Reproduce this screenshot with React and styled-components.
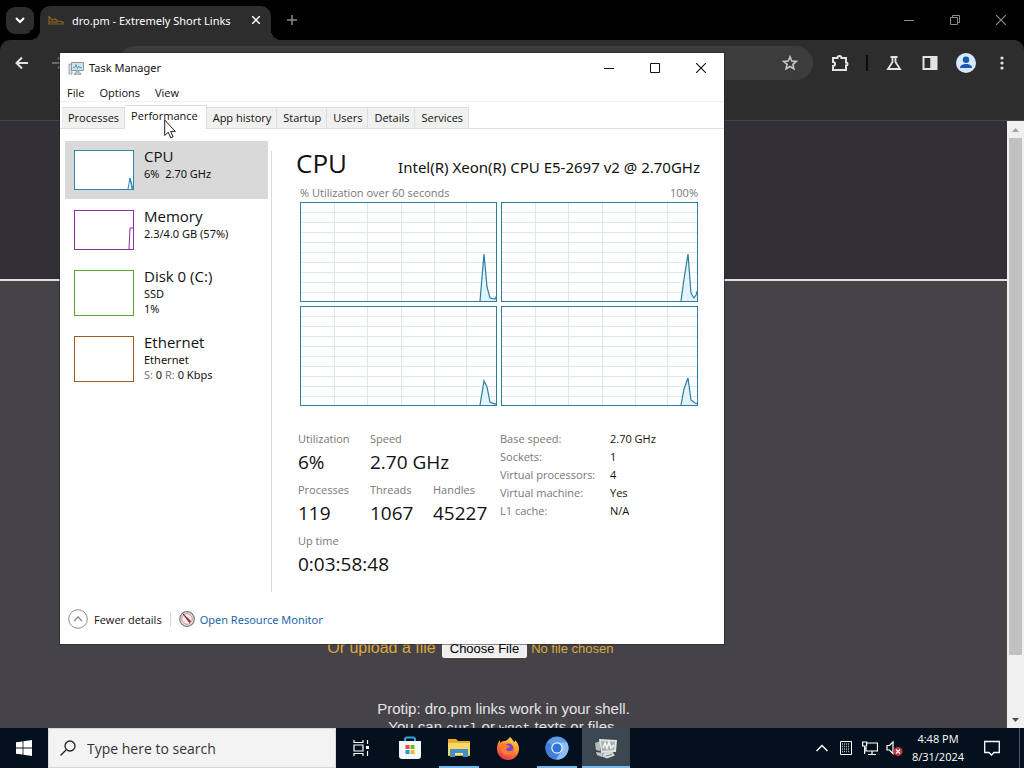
import React from "react";
import styled, { createGlobalStyle } from "styled-components";

const ui = `"Open Sans", "Noto Sans", sans-serif`;
const uiWide = `"Noto Sans", "Open Sans", sans-serif`;
const web = `"Liberation Sans", Arial, sans-serif`;

const GlobalStyle = createGlobalStyle`
  *, *::before, *::after { box-sizing: border-box; }
  html, body { margin: 0; }
  body { background: #000; font-family: ${ui}; font-size: 11px; color: #111; }
  button, input { font: inherit; color: inherit; }
  button { border: 0; padding: 0; background: none; }
  svg { display: block; flex: none; }
  h1, h2, p, dl, dd, dt { margin: 0; font-weight: 400; }
`;

const Desktop = styled.div`
  position: relative;
  display: grid;
  grid-template-rows: minmax(0, 1fr) 40px;
  height: 100vh;
  overflow: hidden;
`;

/* ---------- Browser ---------- */

const Browser = styled.div`
  display: flex;
  flex-direction: column;
  min-height: 0;
  background: #000;
`;

const TabStrip = styled.div`
  display: flex;
  align-items: center;
  height: 40px;
  flex: none;
  padding-left: 6px;
  color: #fff;
`;

const TabSearch = styled.button`
  display: grid;
  place-items: center;
  width: 28px;
  height: 27px;
  margin-right: 6px;
  border-radius: 9px;
  background: #2d2d2d;
`;

const BrowserTab = styled.div`
  position: relative;
  display: flex;
  align-items: center;
  gap: 8px;
  align-self: flex-end;
  width: 231px;
  height: 34px;
  padding: 0 7px 6px 8px;
  border-radius: 10px 10px 0 0;
  background: #2d2d2d;

  &::before, &::after {
    content: "";
    position: absolute;
    bottom: 0;
    width: 10px;
    height: 10px;
  }
  &::before {
    left: -10px;
    background: radial-gradient(circle at 0 0, #000 10px, #2d2d2d 10px);
  }
  &::after {
    right: -10px;
    background: radial-gradient(circle at 100% 0, #000 10px, #2d2d2d 10px);
  }
`;

const TabTitle = styled.span`
  flex: 1;
  white-space: nowrap;
  font-family: ${uiWide};
`;

const IconButton = styled.button`
  display: grid;
  place-items: center;
  width: ${(p) => p.$w || 24}px;
  height: ${(p) => p.$h || 24}px;
  color: ${(p) => p.$color || "inherit"};
`;

const Spacer = styled.div`
  flex: 1;
`;

const Toolbar = styled.div`
  display: flex;
  align-items: center;
  flex: none;
  height: 81px;
  padding: 0 10px 35px;
  border-bottom: 1px solid #47474a;
  border-radius: 10px 10px 0 0;
  background: #2d2d2d;
  color: #e3e3e3;
`;

const AddressBar = styled.div`
  display: flex;
  align-items: center;
  justify-content: flex-end;
  flex: 1;
  height: 34px;
  margin: 0 15px 0 36px;
  padding-right: 11px;
  border-radius: 17px;
  background: #3c3c3c;
`;

const ToolbarActions = styled.div`
  display: flex;
  align-items: center;
  gap: 12px;
`;

const ToolbarRule = styled.span`
  width: 2px;
  height: 16px;
  margin: 0 2px;
  background: #0c0c0c;
`;

const Viewport = styled.div`
  display: flex;
  flex: 1;
  min-height: 0;
`;

const Page = styled.div`
  flex: 1;
  min-width: 0;
  overflow: hidden;
  background: #454348;
  color: #e4e4e4;
  font-family: ${web};
  font-size: 16px;
`;

const Banner = styled.div`
  height: 160px;
  border-bottom: 2px solid #e0e0e0;
  background: #323036;
`;

const PageBody = styled.main`
  display: flex;
  flex-direction: column;
  align-items: center;
  padding-top: 357px;
`;

const Upload = styled.div`
  display: flex;
  align-items: center;
  gap: 6px;
  height: 20px;
  margin-bottom: 42px;
  color: #dba73f;
`;

const FileField = styled.input`
  width: 238px;
  font-family: ${web};
  font-size: 13px;

  &::file-selector-button {
    margin: 0 4px 0 0;
    padding: 1px 7px;
    border: 1px solid #f5f5f5;
    border-radius: 2px;
    background: #efefef;
    color: #000;
    font: inherit;
  }
`;

const Tip = styled.p`
  font-size: 15px;
  line-height: 18px;
  text-align: center;

  code {
    font-family: "Liberation Mono", monospace;
    font-size: 13px;
  }
`;

const ScrollRail = styled.div`
  display: flex;
  flex-direction: column;
  align-items: center;
  width: 17px;
  background: #f0f0f0;
  color: #a5a5a5;
`;

const ScrollThumb = styled.div`
  width: 13px;
  flex: 0 1 517px;
  background: #c1c1c1;
`;

/* ---------- Task Manager ---------- */

const Window = styled.section`
  position: absolute;
  top: 53px;
  left: 60px;
  right: 300px;
  background: #fff;
  box-shadow: 0 0 0 1px rgba(30, 30, 30, 0.5);
`;

const TitleBar = styled.header`
  display: flex;
  align-items: center;
  height: 29px;
  padding-left: 8px;
`;

const WindowTitle = styled.h1`
  flex: 1;
  margin-left: 5px;
  font-family: ${uiWide};
  font-size: 11px;
`;

const MenuBar = styled.nav`
  display: flex;
  gap: 15px;
  height: 20px;
  padding: 0 7px;
  border-bottom: 1px solid #f0f0f0;
  line-height: 22px;
`;

const Tabs = styled.div`
  display: flex;
  align-items: flex-end;
  height: 27px;
  padding-left: 2px;
  border-bottom: 1px solid #dedede;
`;

const Tab = styled.button`
  height: ${(p) => (p.$active ? 24 : 21)}px;
  margin-bottom: ${(p) => (p.$active ? -1 : 0)}px;
  padding: ${(p) => (p.$active ? "0 8px 4px 6px" : "0 5px 0 6px")};
  border: solid #dedede;
  border-width: 1px 1px 0 0;
  background: ${(p) => (p.$active ? "#fff" : "#f0f0f0")};
  line-height: 18px;
  white-space: nowrap;
`;

const Body = styled.div`
  display: flex;
  min-height: 463px;
  padding-top: 12px;
`;

const Sidebar = styled.div`
  display: flex;
  flex-direction: column;
  gap: 2px;
  width: 208px;
  padding-left: 5px;
`;

const Resource = styled.button`
  display: flex;
  align-items: flex-start;
  gap: 10px;
  height: ${(p) => (p.$tall ? 64 : 58)}px;
  padding: 7px 9px;
  background: ${(p) => (p.$active ? "#d9d9d9" : "transparent")};
  text-align: left;
  line-height: 15px;
`;

const Thumb = styled.svg`
  width: 60px;
  height: ${(p) => (p.$tall ? 46 : 40)}px;
  margin-top: 2px;
  border: 1px solid ${(p) => p.$color};
  background: #fff;
  stroke: ${(p) => p.$color};
`;

const ResourceName = styled.span`
  display: block;
  padding-bottom: 2px;
  font-size: 15px;
  line-height: 16px;
`;

const ResourceLine = styled.span`
  display: block;
  white-space: pre;
  font-family: ${uiWide};
`;

const Muted = styled.span`
  color: #777;
`;

const Divider = styled.div`
  width: 1px;
  margin: 10px 24px 0 3px;
  background: #dcdcdc;
`;

const Detail = styled.div`
  flex: 1;
  min-width: 0;
  padding-right: 24px;
`;

const DetailHead = styled.div`
  display: flex;
  align-items: baseline;
  justify-content: space-between;
  height: 44px;
  white-space: nowrap;
  line-height: 44px;

  h2 { font-size: 26px; }
  p { font-family: ${uiWide}; font-size: 15px; }
`;

const GraphLabels = styled.div`
  display: flex;
  justify-content: space-between;
  height: 17px;
  padding: 0 2px 0 4px;
  color: #777;
  line-height: 16px;
`;

const Graphs = styled.div`
  display: grid;
  grid-template-columns: 1fr 1fr;
  gap: 4px;
  padding: 0 2px 0 4px;
`;

const Graph = styled.svg`
  width: 100%;
  height: 100px;
  border: 1px solid #2b7f9e;
  background: #fff;
`;

const Numbers = styled.div`
  display: flex;
  margin-top: 24px;
  padding-left: 2px;
`;

const Stats = styled.dl`
  display: grid;
  grid-template-columns: 72px 63px 67px;
  align-content: start;
  row-gap: 5px;
  padding-top: 1px;
`;

const Stat = styled.div`
  grid-column: span ${(p) => p.$span || 1};
  white-space: nowrap;

  dt { color: #777; line-height: 16px; }
  dd { font-size: 19px; line-height: 30px; }
`;

const Specs = styled.dl`
  display: grid;
  grid-template-columns: 110px auto;
  grid-auto-rows: 18px;
  align-content: start;
  line-height: 18px;

  dt { color: #777; }
`;

const Footer = styled.footer`
  display: flex;
  align-items: center;
  height: 52px;
  padding: 2px 0 0 8px;
`;

const FooterButton = styled.button`
  display: flex;
  align-items: center;
  gap: 6px;
`;

const FooterRule = styled.span`
  width: 1px;
  height: 14px;
  margin: 0 8px;
  background: #d5d5d5;
`;

const FooterLink = styled.a`
  display: flex;
  align-items: center;
  gap: 5px;
  color: #1a66ad;
  font-family: ${uiWide};
  text-decoration: none;
`;

const Pointer = styled.svg`
  position: absolute;
  top: 119px;
  left: 164px;
`;

/* ---------- Taskbar ---------- */

const Taskbar = styled.nav`
  display: flex;
  background: #02111d;
  color: #fff;
`;

const StartButton = styled.button`
  display: grid;
  place-items: center;
  width: 48px;
`;

const Search = styled.label`
  display: flex;
  align-items: center;
  gap: 11px;
  width: 288px;
  padding: 0 11px;
  border: 1px solid #d5d8da;
  background: #f3f3f3;
  color: #222;

  input {
    flex: 1;
    min-width: 0;
    padding: 0;
    border: 0;
    outline: 0;
    background: none;
    font-size: 14px;
  }
  input::placeholder { color: #333; opacity: 1; }
`;

const Apps = styled.div`
  display: flex;
  gap: 1px;
  padding-left: 1px;
`;

const AppButton = styled.button`
  position: relative;
  display: grid;
  place-items: center;
  width: 48px;
  background: ${(p) => (p.$active ? "#3b4751" : "transparent")};

  &::after {
    content: "";
    position: absolute;
    bottom: 0;
    left: ${(p) => (p.$active ? 0 : 4)}px;
    right: ${(p) => (p.$active ? 0 : 4)}px;
    height: 2px;
    background: ${(p) => (p.$open ? "#76b9ed" : "transparent")};
  }
`;

const Tray = styled.div`
  display: flex;
  align-items: center;
  margin-left: auto;
`;

const Clock = styled.time`
  width: 64px;
  text-align: center;
  line-height: 18px;
`;

const ShowDesktop = styled.button`
  width: 5px;
  height: 40px;
  margin-left: 5px;
  border-left: 1px solid #4a5660;
`;

/* ---------- Drawings ---------- */

const Line = ({ size = 16, w = 1.5, d, children, box = 16, ...rest }) => (
  <svg width={size} height={size} viewBox={`0 0 ${box} ${box}`} fill="none" stroke="currentColor" strokeWidth={w} aria-hidden="true" {...rest}>
    {d && <path d={d} />}
    {children}
  </svg>
);

const Favicon = () => (
  <svg width="16" height="16" viewBox="0 0 16 16" fill="none" stroke="#8a6420" strokeWidth="1.2" aria-hidden="true">
    <path d="M1 4v8h14v-2l-5-1-3-2-3 1-2-2z" />
    <path d="M2 10h8" />
  </svg>
);

const MonitorIcon = ({ size = 16 }) => (
  <svg width={size} height={size} viewBox="0 0 16 16" aria-hidden="true">
    <path d="M1 4h3v10H1z" fill="#d7dde1" stroke="#8b989f" strokeWidth=".8" />
    <path d="M3.500 2.500h12v8h-12z" fill="#cfe3ec" stroke="#8a979f" />
    <path d="M5 7.500h2l1-3 1.500 4 1.200-2.500.8 1.500H14" fill="none" stroke="#4f98aa" strokeWidth=".9" />
    <path d="M8 11h3v2h2v1.500H6V13h2z" fill="#b9c5cc" stroke="#8b989f" strokeWidth=".6" />
  </svg>
);

const TaskManagerIcon = () => (
  <svg width="26" height="26" viewBox="0 0 26 26" aria-hidden="true">
    <path d="M2 8l5-2v10l-4-1z" fill="#b5babb" />
    <path d="M6 4l18 1-1 12-15 1z" fill="#dfe3e2" />
    <path d="M8 6l14 .8-1 8.200-12 1z" fill="#a9b2ae" />
    <path d="M10 13l2-5 2 5 2-6 2 6 3-3" fill="none" stroke="#f3f8f3" strokeWidth="1.500" />
    <path d="M11 17l8-.5 3 4-8 3-5-2z" fill="#d4d8d9" />
    <path d="M3 17l7 1-1 4-5-2z" fill="#c2c7c9" />
    <path d="M13 21l6-1.500" stroke="#80888b" />
  </svg>
);

const StoreIcon = () => (
  <svg width="24" height="26" viewBox="0 0 24 26" aria-hidden="true">
    <path d="M7 7V4.500C7 3 8 2.500 9 2.500h6c1 0 2 .5 2 2V7" fill="none" stroke="#36a3dc" strokeWidth="2" />
    <path d="M1 6h22v15c0 2-1 3-3 3H4c-2 0-3-1-3-3z" fill="#f4f6f8" />
    <path d="M7.500 10h4v4h-4z" fill="#e05032" />
    <path d="M12.500 10h4v4h-4z" fill="#78b41c" />
    <path d="M7.500 15h4v4h-4z" fill="#1c9be0" />
    <path d="M12.500 15h4v4h-4z" fill="#f5b81d" />
  </svg>
);

const ExplorerIcon = () => (
  <svg width="24" height="24" viewBox="0 0 24 24" aria-hidden="true">
    <path d="M1 3h8l2 2h12v15H1z" fill="#e9ad2c" />
    <path d="M1 7h22v12H1z" fill="#fbd863" />
    <path d="M3 13h18v8h-5v-4H8v4H3z" fill="#3f90cf" />
    <path d="M8 17h8v2H8z" fill="#fbe28a" />
  </svg>
);

const FirefoxIcon = () => (
  <svg width="24" height="24" viewBox="0 0 24 24" aria-hidden="true">
    <defs>
      <linearGradient id="fox" x1=".8" y1="0" x2=".3" y2="1">
        <stop offset="0" stopColor="#ffe14a" />
        <stop offset=".5" stopColor="#ff8a2a" />
        <stop offset="1" stopColor="#ee2a56" />
      </linearGradient>
    </defs>
    <path d="M14 1c2 2 3 3 4 5 1 0 1-1 1-2 3 3 4 6 4 9a11 11 0 0 1-22 0c0-4 1-7 3-9v3c1-1 2-2 4-2 3 0 4-2 6-4z" fill="url(#fox)" />
    <circle cx="12.500" cy="12.500" r="5" fill="#7542c9" />
    <path d="M5 8c2-1 4-1 6 1l3 1c-1 2-3 2-4 3 1 3 5 3 7 0 0 4-3 6-6 6-4 0-7-4-6-11z" fill="#ff7a33" />
  </svg>
);

const ChromiumIcon = () => (
  <svg width="24" height="24" viewBox="0 0 24 24" aria-hidden="true">
    <circle cx="12" cy="12" r="11.500" fill="#5b9bea" />
    <path d="M12 12L2 6.300A11.500 11.500 0 0 0 11 23.500l5-8.500z" fill="#3f7fd6" />
    <path d="M12 6.500h10A11.500 11.500 0 0 1 11 23.500l6-9z" fill="#8fbcf5" />
    <circle cx="12" cy="12" r="5.800" fill="#e8f2ff" />
    <circle cx="12" cy="12" r="4.500" fill="#2f74d8" />
  </svg>
);

const graphs = [
  "179,98 183,51 186,84 189,95 194,96 196,92",
  "179,98 182,76 186,51 189,90 192,95 194,92 196,86",
  "179,98 183,74 186,80 189,95 194,97 196,96",
  "179,98 182,82 186,71 189,93 193,96 196,97",
];

const CoreGraph = ({ points }) => (
  <Graph viewBox="0 0 195 98" preserveAspectRatio="none" aria-hidden="true">
    <g stroke="#dce8e9" strokeWidth="1">
      {[33, 66, 100, 133, 165].map((x) => <path key={x} d={`M${x}.5 0v98`} />)}
      {[9, 19, 29, 39, 49, 59, 69, 79, 89].map((y) => <path key={y} d={`M0 ${y}.5h195`} />)}
    </g>
    <polygon points={`${points} 196,98`} fill="#e3f3fa" />
    <polyline points={points} fill="none" stroke="#2b7f9e" strokeWidth="1.200" />
  </Graph>
);

const resources = [
  { name: "CPU", lines: ["6%  2.70 GHz"], color: "#2e86b5", line: "M53 38l2-11 2 11M55 27l3 11", active: true },
  { name: "Memory", lines: ["2.3/4.0 GB (57%)"], color: "#8b2fa0", line: "M54 38l1-21h3" },
  { name: "Disk 0 (C:)", lines: ["SSD", "1%"], color: "#58a52e", tall: true },
  {
    name: "Ethernet",
    lines: ["Ethernet", <><Muted>S: </Muted>0 <Muted>R: </Muted>0 Kbps</>],
    color: "#9c5a22",
    tall: true,
  },
];

const stats = [
  ["Utilization", "6%"],
  ["Speed", "2.70 GHz", 2],
  ["Processes", "119"],
  ["Threads", "1067"],
  ["Handles", "45227"],
  ["Up time", "0:03:58:48", 3],
];

const specs = [
  ["Base speed:", "2.70 GHz"],
  ["Sockets:", "1"],
  ["Virtual processors:", "4"],
  ["Virtual machine:", "Yes"],
  ["L1 cache:", "N/A"],
];

const tabs = ["Processes", "Performance", "App history", "Startup", "Users", "Details", "Services"];

function BrowserWindow() {
  return (
    <Browser>
      <TabStrip>
        <TabSearch aria-label="Search tabs"><Line size={10} box={10} w={2} d="M1 3l4 4 4-4" /></TabSearch>
        <BrowserTab>
          <Favicon />
          <TabTitle>dro.pm - Extremely Short Links</TabTitle>
          <IconButton $w={16} $h={16} aria-label="Close tab"><Line size={8} box={8} d="M0 0l8 8M8 0L0 8" /></IconButton>
        </BrowserTab>
        <IconButton $w={42} $color="#8a8a8a" aria-label="New tab"><Line size={12} box={12} d="M6 1v10M1 6h10" /></IconButton>
        <Spacer />
        <IconButton $w={46} $color="#8c8c8c" aria-label="Minimize"><Line size={10} box={10} w={1} d="M0 5.500h10" /></IconButton>
        <IconButton $w={46} $color="#8c8c8c" aria-label="Restore"><Line size={10} box={10} w={1} d="M.5 2.500h7v7h-7zM2.500 2.500v-2h7v7h-2" /></IconButton>
        <IconButton $w={46} $color="#8c8c8c" aria-label="Close"><Line size={10} box={10} w={1.2} d="M0 0l10 10M10 0L0 10" /></IconButton>
      </TabStrip>
      <Toolbar>
        <IconButton aria-label="Back"><Line w={2} d="M14 8H3M8 2.500L2.500 8 8 13.500" /></IconButton>
        <IconButton $w={48} $color="#6a6a6a" aria-label="Forward"><Line w={2} d="M2 8h11M8 2.500L13.500 8 8 13.500" /></IconButton>
        <AddressBar>
          <IconButton $color="#c7c7c7" aria-label="Bookmark this tab">
            <Line w={1.6} d="M8 1.800l1.800 4.200 4.500.4-3.400 3 1 4.500L8 11.500l-3.900 2.400 1-4.500-3.400-3 4.500-.4z" />
          </IconButton>
        </AddressBar>
        <ToolbarActions>
          <IconButton aria-label="Extensions">
            <Line size={18} box={18} w={2} d="M2 4h4.500a2 2 0 0 1 4 0H15v4.500a1.500 1.500 0 0 1 0 3V16H2v-4a2 2 0 0 0 0-4z" />
          </IconButton>
          <ToolbarRule />
          <IconButton aria-label="Labs"><Line w={1.8} d="M4.500 2h7M6.500 2v5L2 14h12L9.500 7V2" /></IconButton>
          <IconButton aria-label="Side panel">
            <Line><path d="M1.500 2h13v12h-13z" strokeWidth="2" /><path d="M9 2h5v12H9z" fill="currentColor" /></Line>
          </IconButton>
          <IconButton aria-label="Profile">
            <svg width="20" height="20" viewBox="0 0 20 20" aria-hidden="true">
              <circle cx="10" cy="10" r="10" fill="#d8e8fb" />
              <circle cx="10" cy="6.800" r="3.200" fill="#1b57ae" />
              <path d="M4 15c0-3 3-4 6-4s6 1 6 4z" fill="#1b57ae" />
            </svg>
          </IconButton>
          <IconButton aria-label="Menu">
            <Line stroke="none"><g fill="currentColor"><circle cx="8" cy="3" r="1.600" /><circle cx="8" cy="8" r="1.600" /><circle cx="8" cy="13" r="1.600" /></g></Line>
          </IconButton>
        </ToolbarActions>
      </Toolbar>
      <Viewport>
        <Page>
          <Banner />
          <PageBody>
            <Upload>
              <label htmlFor="upload">Or upload a file</label>
              <FileField id="upload" type="file" />
            </Upload>
            <Tip>Protip: dro.pm links work in your shell.<br />You can <code>curl</code> or <code>wget</code> texts or files.</Tip>
          </PageBody>
        </Page>
        <ScrollRail>
          <IconButton $w={17} $h={17} aria-label="Scroll up"><svg width="7" height="4" viewBox="0 0 7 4"><path d="M0 4l3.500-4L7 4z" fill="#a5a5a5" /></svg></IconButton>
          <ScrollThumb />
          <Spacer />
          <IconButton $w={17} $h={17} aria-label="Scroll down"><svg width="7" height="4" viewBox="0 0 7 4"><path d="M0 0h7L3.500 4z" fill="#505050" /></svg></IconButton>
        </ScrollRail>
      </Viewport>
    </Browser>
  );
}

function TaskManager() {
  return (
    <Window>
      <TitleBar>
        <MonitorIcon />
        <WindowTitle>Task Manager</WindowTitle>
        <IconButton $w={46} aria-label="Minimize"><Line size={10} box={10} w={1} d="M0 5.500h10" /></IconButton>
        <IconButton $w={46} aria-label="Maximize"><Line size={10} box={10} w={1} d="M.5.5h9v9h-9z" /></IconButton>
        <IconButton $w={46} aria-label="Close"><Line size={10} box={10} w={1.1} d="M0 0l10 10M10 0L0 10" /></IconButton>
      </TitleBar>
      <MenuBar>
        <button>File</button>
        <button>Options</button>
        <button>View</button>
      </MenuBar>
      <Tabs role="tablist">
        {tabs.map((t) => (
          <Tab key={t} role="tab" aria-selected={t === "Performance"} $active={t === "Performance"}>{t}</Tab>
        ))}
      </Tabs>
      <Body>
        <Sidebar>
          {resources.map((r) => (
            <Resource key={r.name} $tall={r.tall} $active={r.active}>
              <Thumb viewBox={r.tall ? "0 0 58 44" : "0 0 58 38"} fill="none" $tall={r.tall} $color={r.color} aria-hidden="true">
                {r.line && <path d={r.line} />}
              </Thumb>
              <span>
                <ResourceName>{r.name}</ResourceName>
                {r.lines.map((l, i) => <ResourceLine key={i}>{l}</ResourceLine>)}
              </span>
            </Resource>
          ))}
        </Sidebar>
        <Divider />
        <Detail>
          <DetailHead>
            <h2>CPU</h2>
            <p>Intel(R) Xeon(R) CPU E5-2697 v2 @ 2.70GHz</p>
          </DetailHead>
          <GraphLabels><span>% Utilization over 60 seconds</span><span>100%</span></GraphLabels>
          <Graphs>{graphs.map((g) => <CoreGraph key={g} points={g} />)}</Graphs>
          <Numbers>
            <Stats>
              {stats.map(([k, v, span]) => (
                <Stat key={k} $span={span}><dt>{k}</dt><dd>{v}</dd></Stat>
              ))}
            </Stats>
            <Specs>
              {specs.map(([k, v]) => (
                <React.Fragment key={k}><dt>{k}</dt><dd>{v}</dd></React.Fragment>
              ))}
            </Specs>
          </Numbers>
        </Detail>
      </Body>
      <Footer>
        <FooterButton>
          <Line size={20} box={20} w={1} stroke="#8a8a8a"><circle cx="10" cy="10" r="9.300" /><path d="M6 12l4-4 4 4" strokeWidth="1.300" /></Line>
          Fewer details
        </FooterButton>
        <FooterRule />
        <FooterLink href="#resource-monitor">
          <svg width="16" height="16" viewBox="0 0 16 16" fill="none" aria-hidden="true">
            <circle cx="8" cy="8" r="7.300" fill="#f1eeee" stroke="#777" strokeWidth="1.200" />
            <circle cx="8" cy="8" r="5.300" stroke="#d98c8c" />
            <path d="M4 3l6.500 8.500L11.500 10z" fill="#a01f24" stroke="#7b1a1e" strokeWidth=".8" />
          </svg>
          Open Resource Monitor
        </FooterLink>
      </Footer>
    </Window>
  );
}

function SystemTaskbar() {
  return (
    <Taskbar>
      <StartButton aria-label="Start">
        <svg width="16" height="16" viewBox="0 0 16 16" fill="#fff" aria-hidden="true">
          <path d="M0 2.300l6.600-.9v6.200H0zM7.400 1.300L16 0v7.600H7.400zM0 8.400h6.600v6.200L0 13.700zM7.400 8.400H16V16l-8.600-1.300z" />
        </svg>
      </StartButton>
      <Search>
        <Line w={1.3} d="M6 10L.5 15.500"><circle cx="10" cy="6" r="5" /></Line>
        <input type="text" aria-label="Search" placeholder="Type here to search" />
      </Search>
      <Apps>
        <AppButton aria-label="Task view">
          <Line size={18} box={18} w={1.2} d="M2 1v2.500h9V1M2 6h9v6H2zM2 17v-2.500h9V17M15.500 1v4M15.500 12v5"><path d="M14 7h3v3h-3z" fill="#fff" stroke="none" /></Line>
        </AppButton>
        <AppButton aria-label="Microsoft Store"><StoreIcon /></AppButton>
        <AppButton aria-label="File Explorer" $open><ExplorerIcon /></AppButton>
        <AppButton aria-label="Firefox"><FirefoxIcon /></AppButton>
        <AppButton aria-label="Chromium" $open><ChromiumIcon /></AppButton>
        <AppButton aria-label="Task Manager" $open $active><TaskManagerIcon /></AppButton>
      </Apps>
      <Tray>
        <IconButton aria-label="Show hidden icons"><Line size={12} box={12} d="M.5 9L6 3.500 11.500 9" /></IconButton>
        <IconButton aria-label="Touch keyboard">
          <Line w={1} d="M2.500 1.500h11v13h-11z"><path d="M4 4h8M4 6.500h8M4 9h8M4 11.500h8" strokeDasharray="1 1" strokeWidth="1.500" stroke="#aab2b8" /></Line>
        </IconButton>
        <IconButton aria-label="Network"><Line w={1.2} d="M5 3h10.500v8H4V7M10 11v3M6 14.500h8M.6 2h4v4h-4zM2.600 6v8" /></IconButton>
        <IconButton aria-label="Volume muted">
          <Line size={18} box={18} w={1.2} d="M2 6.500h2.500L8 3v11.500L4.500 11H2z">
            <circle cx="13" cy="12.500" r="4.500" fill="#c9303e" stroke="none" />
            <path d="M11 10.500l4 4M15 10.500l-4 4" />
          </Line>
        </IconButton>
        <Clock dateTime="2024-08-31T16:48">4:48 PM<br />8/31/2024</Clock>
        <IconButton $w={44} $h={40} aria-label="Notifications"><Line w={1.3} d="M.7 1.500h14.600v11H10l-2.500 2.500L5 12.500H.7z" /></IconButton>
        <ShowDesktop aria-label="Show desktop" />
      </Tray>
    </Taskbar>
  );
}

export default function App() {
  return (
    <Desktop>
      <GlobalStyle />
      <BrowserWindow />
      <SystemTaskbar />
      <TaskManager />
      <Pointer width="12" height="20" viewBox="0 0 12 20" aria-hidden="true">
        <path d="M.7 1v15.500l3.600-3.300 2.400 5.600 2.400-1-2.400-5.400h4.600z" fill="#fff" stroke="#222" strokeWidth="1" />
      </Pointer>
    </Desktop>
  );
}
